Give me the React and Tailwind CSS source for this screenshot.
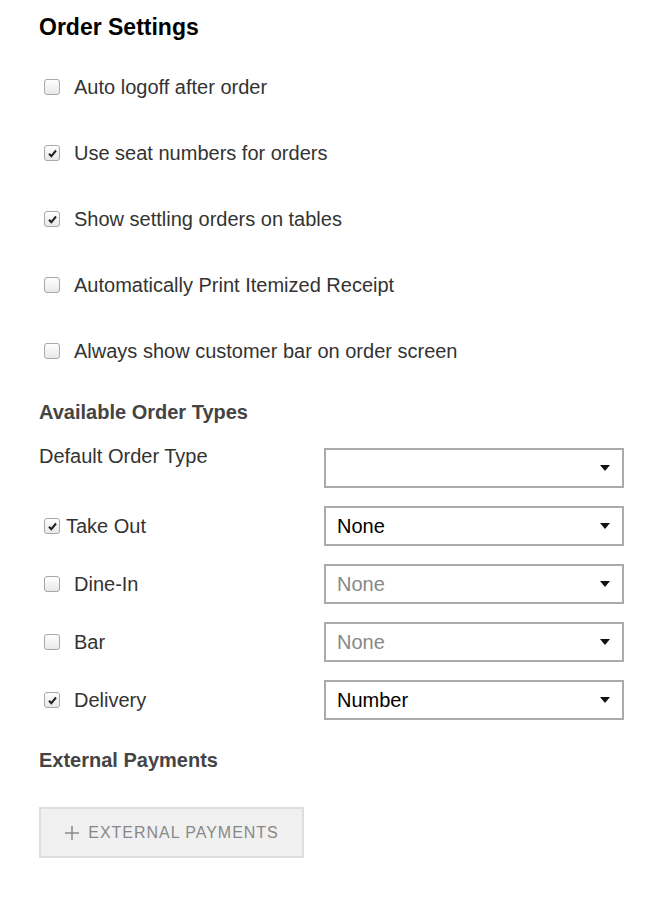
const Box = ({ checked }) => (
  <span className="inline-flex items-center justify-center w-[16px] h-[16px] rounded-[3px] border border-[#a8a8a8] bg-gradient-to-b from-white to-[#e8e8e8] shrink-0">
    {checked && (
      <svg width="11" height="11" viewBox="0 0 11 11"><path d="M2 5.8 L4.3 8.2 L9 2.5" fill="none" stroke="#222" strokeWidth="2" /></svg>
    )}
  </span>
);

const Check = ({ checked, label }) => (
  <div className="h-[66px] flex items-center">
    <div className="w-[35px] pl-[5px] flex"><Box checked={checked} /></div>
    <span>{label}</span>
  </div>
);

const Sel = ({ value, muted }) => (
  <div className="w-[300px] h-[40px] border-2 border-[#ababab] flex items-center px-[11px] justify-between">
    <span className={muted ? "text-[#888]" : "text-black"}>{value}</span>
    <svg width="10" height="6" viewBox="0 0 10 6" className="mr-[1px]"><path d="M0 0 H10 L5 6Z" fill="#111" /></svg>
  </div>
);

const Row = ({ left, value, muted }) => (
  <div className="h-[58px] flex items-center justify-between pr-[38px]">
    <div className="flex items-center">{left}</div>
    <Sel value={value} muted={muted} />
  </div>
);

export default function App() {
  return (
    <div className="bg-white w-[662px] h-[901px] pl-[39px] pt-[12px] text-[20px] text-[#333]" style={{ fontFamily: '"Helvetica Neue", "Liberation Sans", Arial, sans-serif' }}>
      <h1 className="text-[23px] font-bold text-black leading-[30px]">Order Settings</h1>
      <div className="mt-[12px]">
        <Check label="Auto logoff after order" />
        <Check checked label="Use seat numbers for orders" />
        <Check checked label="Show settling orders on tables" />
        <Check label="Automatically Print Itemized Receipt" />
        <Check label="Always show customer bar on order screen" />
      </div>
      <h2 className="mt-[14px] font-bold text-[#444] leading-[28px]">Available Order Types</h2>
      <div className="mt-[22px]">
        <div className="h-[49px] flex items-start justify-between pr-[38px]">
          <span className="-mt-[7px]">Default Order Type</span>
          <Sel value="" />
        </div>
        <Row left={<><span className="pl-[5px] pr-[6px] flex"><Box checked /></span>Take Out</>} value="None" />
        <Row left={<><span className="pl-[5px] w-[35px] flex"><Box /></span>Dine-In</>} value="None" muted />
        <Row left={<><span className="pl-[5px] w-[35px] flex"><Box /></span>Bar</>} value="None" muted />
        <Row left={<><span className="pl-[5px] w-[35px] flex"><Box checked /></span>Delivery</>} value="Number" />
      </div>
      <h2 className="mt-[17px] font-bold text-[#444] leading-[28px]">External Payments</h2>
      <button className="mt-[33px] w-[265px] h-[51px] bg-[#f0f0f0] border-2 border-[#dedede] text-[#888] text-[16px] tracking-[0.06em] flex items-center justify-center gap-[8px]">
        <svg width="16" height="16" viewBox="0 0 16 16"><path d="M8 1V15M1 8H15" stroke="#888" strokeWidth="1.5" /></svg>
        EXTERNAL PAYMENTS
      </button>
    </div>
  );
}
